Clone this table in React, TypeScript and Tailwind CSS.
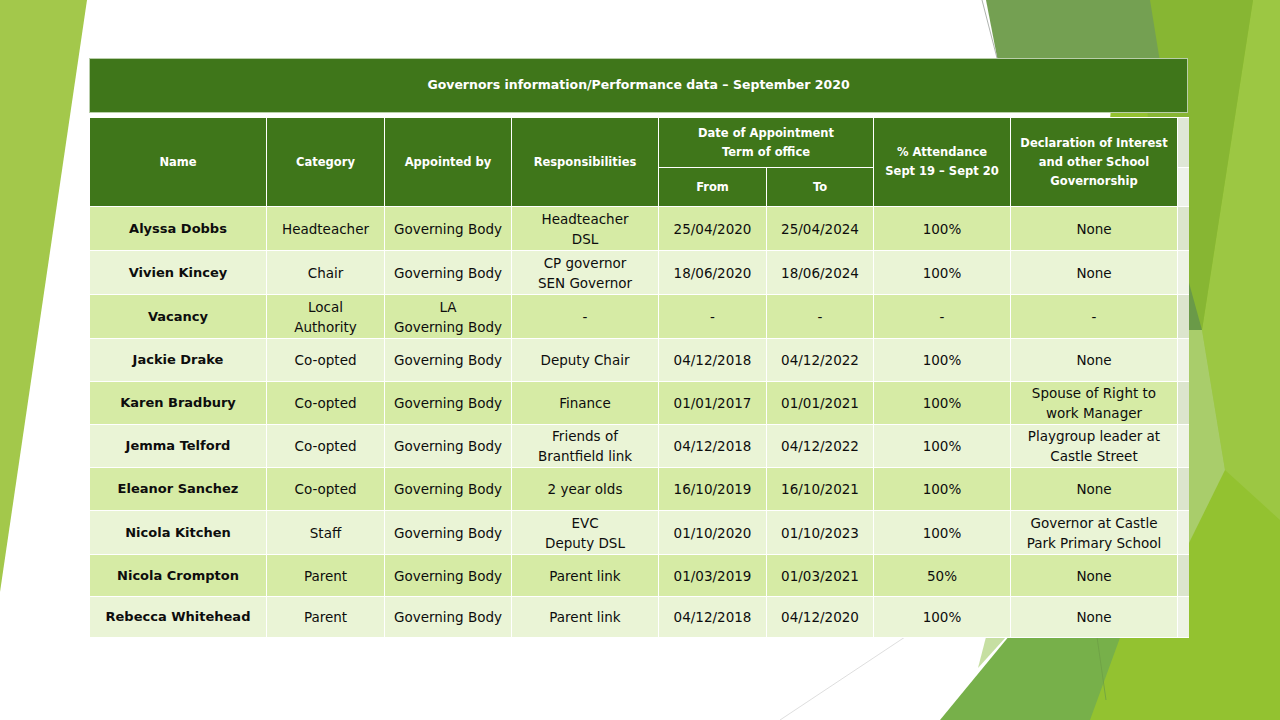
const rows = [
  { name: 'Alyssa Dobbs', cat: ['Headteacher'], by: ['Governing Body'], resp: ['Headteacher', 'DSL'], from: '25/04/2020', to: '25/04/2024', att: '100%', decl: ['None'] },
  { name: 'Vivien Kincey', cat: ['Chair'], by: ['Governing Body'], resp: ['CP governor', 'SEN Governor'], from: '18/06/2020', to: '18/06/2024', att: '100%', decl: ['None'] },
  { name: 'Vacancy', cat: ['Local', 'Authority'], by: ['LA', 'Governing Body'], resp: ['-'], from: '-', to: '-', att: '-', decl: ['-'] },
  { name: 'Jackie Drake', cat: ['Co-opted'], by: ['Governing Body'], resp: ['Deputy Chair'], from: '04/12/2018', to: '04/12/2022', att: '100%', decl: ['None'] },
  { name: 'Karen Bradbury', cat: ['Co-opted'], by: ['Governing Body'], resp: ['Finance'], from: '01/01/2017', to: '01/01/2021', att: '100%', decl: ['Spouse of Right to', 'work Manager'] },
  { name: 'Jemma Telford', cat: ['Co-opted'], by: ['Governing Body'], resp: ['Friends of', 'Brantfield link'], from: '04/12/2018', to: '04/12/2022', att: '100%', decl: ['Playgroup leader at', 'Castle Street'] },
  { name: 'Eleanor Sanchez', cat: ['Co-opted'], by: ['Governing Body'], resp: ['2 year olds'], from: '16/10/2019', to: '16/10/2021', att: '100%', decl: ['None'] },
  { name: 'Nicola Kitchen', cat: ['Staff'], by: ['Governing Body'], resp: ['EVC', 'Deputy DSL'], from: '01/10/2020', to: '01/10/2023', att: '100%', decl: ['Governor at Castle', 'Park Primary School'] },
  { name: 'Nicola Crompton', cat: ['Parent'], by: ['Governing Body'], resp: ['Parent link'], from: '01/03/2019', to: '01/03/2021', att: '50%', decl: ['None'] },
  { name: 'Rebecca Whitehead', cat: ['Parent'], by: ['Governing Body'], resp: ['Parent link'], from: '04/12/2018', to: '04/12/2020', att: '100%', decl: ['None'] },
]

const heights = ['h-[44px]', 'h-[44px]', 'h-[44px]', 'h-[43px]', 'h-[43px]', 'h-[43px]', 'h-[43px]', 'h-[44px]', 'h-[42px]', 'h-[41px]']

function Lines({ items }: { items: string[] }) {
  return (
    <>
      {items.map((t, i) => (
        <div key={i}>{t}</div>
      ))}
    </>
  )
}

// slide backdrop: the facet shapes left and right of the table
function Background() {
  return (
    <svg className="absolute inset-0" width="1280" height="720" viewBox="0 0 1280 720">
      <polygon points="0,0 87,0 0,592" fill="#a3c84b" />
      <polygon points="1120,0 1280,0 1280,720 1060,720" fill="#93c230" />
      <polygon points="1253,0 1280,0 1280,520 1225,470 1202,330" fill="#9cc743" />
      <polygon points="1140,0 1253,0 1202,330 1160,300" fill="#87b633" />
      <polygon points="986,0 1150,0 1160,62 998,62" fill="#74a052" />
      <polygon points="1180,250 1202,330 1180,415" fill="#6a9a48" />
      <polygon points="1180,330 1202,330 1225,470 1188,545 1180,545" fill="#a9cd6b" />
      <polygon points="940,720 1080,550 1152,550 1090,720" fill="#77b04a" />
      <polygon points="986,637 1006,637 978,668" fill="#c6dfa2" />
      <line x1="1097" y1="637" x2="1106" y2="700" stroke="#6d9f45" strokeWidth="0.8" />
      <line x1="982" y1="0" x2="997" y2="58" stroke="#9aa09a" strokeWidth="0.8" />
      <line x1="905" y1="637" x2="780" y2="720" stroke="#d6d6d6" strokeWidth="0.8" />
    </svg>
  )
}

export default function App() {
  return (
    <div className="relative w-[1280px] h-[720px] overflow-hidden bg-white" style={{ fontFamily: '"DejaVu Sans", sans-serif' }}>
      <Background />
      <div className="relative pt-[58px] pl-[89px]">
        <div className="w-[1099px]">
          <div className="h-[55px] bg-[#3f761a] border border-[#b9ceaa] flex items-center justify-center text-white font-bold text-[12.5px] mb-[4px]">
            Governors information/Performance data – September 2020
          </div>
          <table className="table-fixed border-collapse w-[1099px] text-center">
            <colgroup>
              <col className="w-[177px]" />
              <col className="w-[118px]" />
              <col className="w-[127px]" />
              <col className="w-[147px]" />
              <col className="w-[108px]" />
              <col className="w-[107px]" />
              <col className="w-[137px]" />
              <col className="w-[167px]" />
              <col className="w-[11px]" />
            </colgroup>
            <thead className="text-white font-bold text-[11.5px] leading-[19px]">
              <tr className="h-[50px]">
                <th rowSpan={2} className="bg-[#3f761a] border border-white">Name</th>
                <th rowSpan={2} className="bg-[#3f761a] border border-white">Category</th>
                <th rowSpan={2} className="bg-[#3f761a] border border-white">Appointed by</th>
                <th rowSpan={2} className="bg-[#3f761a] border border-white">Responsibilities</th>
                <th colSpan={2} className="bg-[#3f761a] border border-white">
                  <div>Date of Appointment</div>
                  <div>Term of office</div>
                </th>
                <th rowSpan={2} className="bg-[#3f761a] border border-white">
                  <div>% Attendance</div>
                  <div>Sept 19 – Sept 20</div>
                </th>
                <th rowSpan={2} className="bg-[#3f761a] border border-white">
                  <div>Declaration of Interest</div>
                  <div>and other School</div>
                  <div>Governorship</div>
                </th>
                <th className="bg-[#dfe7d6] border-y border-white" />
              </tr>
              <tr className="h-[39px]">
                <th className="bg-[#3f761a] border border-white">From</th>
                <th className="bg-[#3f761a] border border-white">To</th>
                <th className="bg-[#eef2ea] border-y border-white" />
              </tr>
            </thead>
            <tbody className="text-[13.5px] leading-[20px] text-[#0d0d0d]">
              {rows.map((r, i) => {
                const odd = i % 2 === 0
                const cell = `border border-white ${odd ? 'bg-[#d6eba5]' : 'bg-[#eaf4d6]'}`
                return (
                  <tr key={r.name} className={heights[i]}>
                    <td className={`${cell} font-bold text-[13px]`}>{r.name}</td>
                    <td className={cell}><Lines items={r.cat} /></td>
                    <td className={cell}><Lines items={r.by} /></td>
                    <td className={cell}><Lines items={r.resp} /></td>
                    <td className={cell}>{r.from}</td>
                    <td className={cell}>{r.to}</td>
                    <td className={cell}>{r.att}</td>
                    <td className={cell}><Lines items={r.decl} /></td>
                    <td className={`border-y border-white ${odd ? 'bg-[#dce5cd]' : 'bg-[#eef3e5]'}`} />
                  </tr>
                )
              })}
            </tbody>
          </table>
        </div>
      </div>
    </div>
  )
}
